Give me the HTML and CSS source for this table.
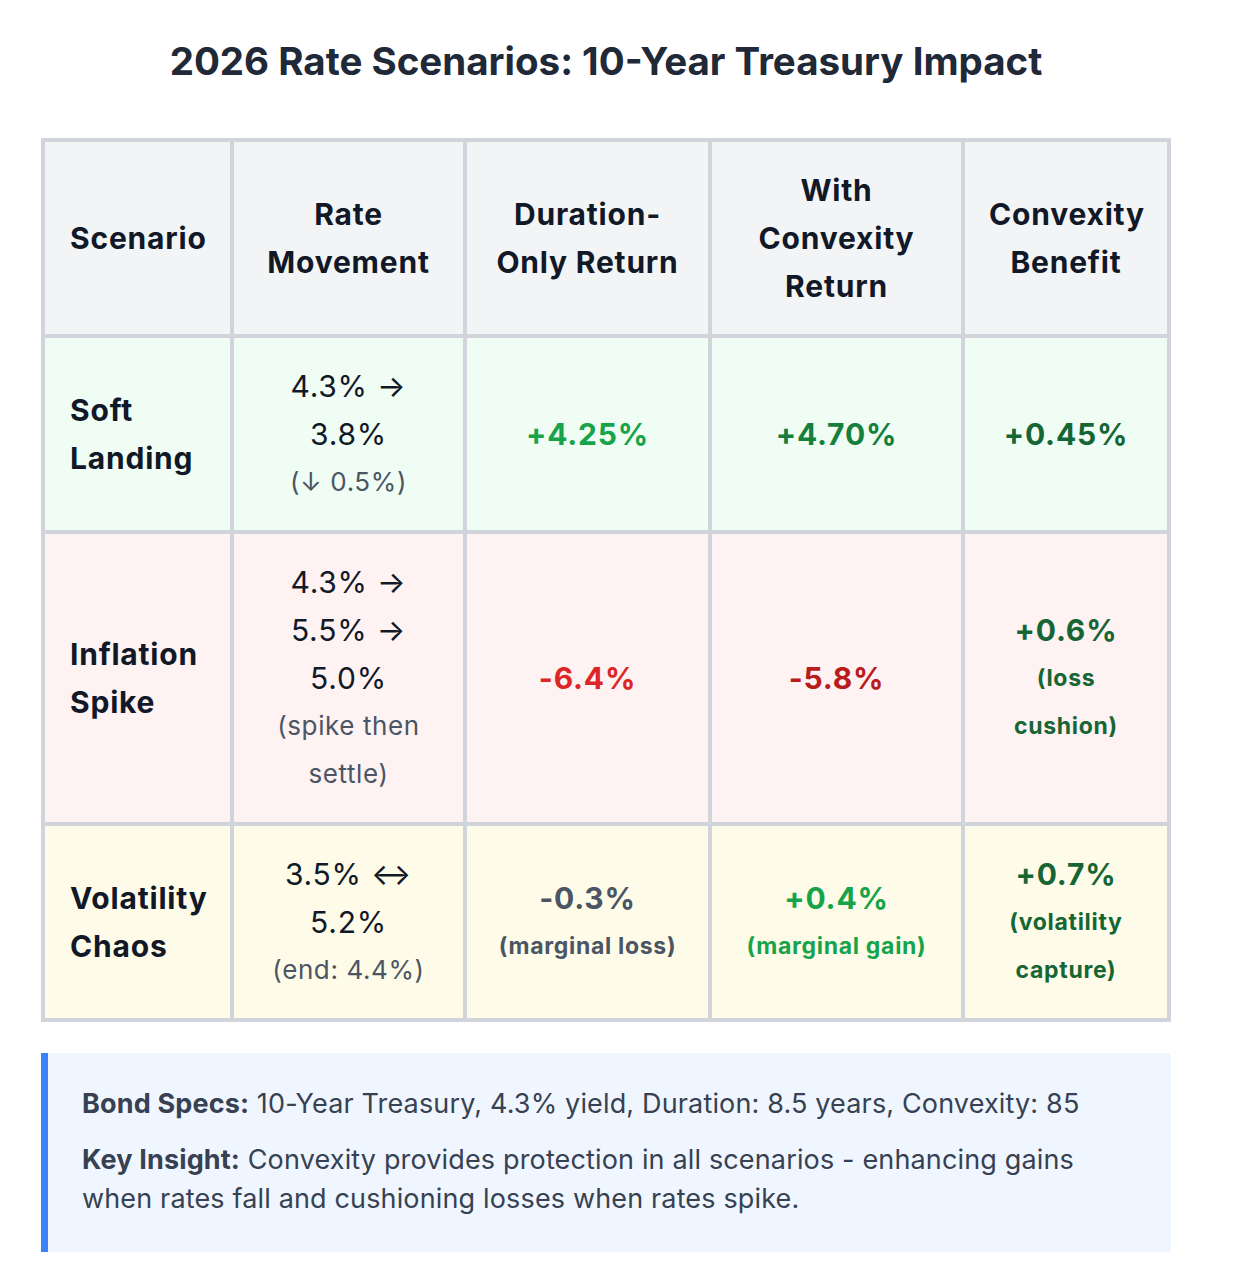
FILE: index.html
```html
<!DOCTYPE html>
<html lang="en">
<head>
<meta charset="utf-8">
<title>2026 Rate Scenarios</title>
<link rel="stylesheet" href="styles.css">
</head>
<body>
<main class="page">
  <h1 class="title">2026 Rate Scenarios: 10-Year Treasury Impact</h1>
  <table class="scenarios">
    <colgroup>
      <col class="c1"><col class="c2"><col class="c3"><col class="c4"><col class="c5">
    </colgroup>
    <thead>
      <tr>
        <th class="left">Scenario</th>
        <th>Rate Movement</th>
        <th>Duration-Only Return</th>
        <th>With Convexity Return</th>
        <th>Convexity Benefit</th>
      </tr>
    </thead>
    <tbody>
      <tr class="row-soft">
        <td class="name">Soft Landing</td>
        <td class="move">4.3% → 3.8%<span class="note">(↓ 0.5%)</span></td>
        <td class="val green-1">+4.25%</td>
        <td class="val green-2">+4.70%</td>
        <td class="val green-3">+0.45%</td>
      </tr>
      <tr class="row-infl">
        <td class="name">Inflation Spike</td>
        <td class="move">4.3% → 5.5% → 5.0%<span class="note">(spike then settle)</span></td>
        <td class="val red-1">-6.4%</td>
        <td class="val red-2">-5.8%</td>
        <td class="val green-3">+0.6%<span class="sub">(loss cushion)</span></td>
      </tr>
      <tr class="row-vol">
        <td class="name">Volatility Chaos</td>
        <td class="move">3.5% ↔ 5.2%<span class="note">(end: 4.4%)</span></td>
        <td class="val gray">-0.3%<span class="sub">(marginal loss)</span></td>
        <td class="val green-1">+0.4%<span class="sub">(marginal gain)</span></td>
        <td class="val green-3">+0.7%<span class="sub">(volatility capture)</span></td>
      </tr>
    </tbody>
  </table>
  <section class="info">
    <p><strong>Bond Specs:</strong> 10-Year Treasury, 4.3% yield, Duration: 8.5 years, Convexity: 85</p>
    <p><strong>Key Insight:</strong> Convexity provides protection in all scenarios - enhancing gains when rates fall and cushioning losses when rates spike.</p>
  </section>
</main>
</body>
</html>
```
FILE: styles.css
```css
html, body {
  margin: 0;
  padding: 0;
  background: #ffffff;
}

body {
  font-family: Inter, "Noto Sans", "Liberation Sans", sans-serif;
  color: #111827;
}

.page {
  width: 1130px;
  padding: 38px 0 0 41px;
}

.title {
  margin: 0 0 54px;
  font-size: 38.5px;
  line-height: 46px;
  font-weight: 700;
  color: #1f2937;
  text-align: center;
}

.scenarios {
  width: 1130px;
  table-layout: fixed;
  border-collapse: collapse;
  border: 4px solid #d1d5db;
}

.c1 { width: 189px; }
.c2 { width: 233px; }
.c3 { width: 245px; }
.c4 { width: 253px; }
.c5 { width: 206px; }

.scenarios th,
.scenarios td {
  border: 4px solid #d1d5db;
  padding: 24px;
  font-size: 30px;
  line-height: 48px;
  letter-spacing: 0.8px;
  text-align: center;
  vertical-align: middle;
}

.scenarios th {
  background: #f3f4f6;
  font-weight: 700;
  color: #111827;
}

.scenarios th.left,
.scenarios td.name {
  text-align: left;
  padding-left: 25px;
  padding-right: 20px;
}

.scenarios td.name {
  font-weight: 700;
}

.row-soft td { background: #f0fdf4; }
.row-infl td { background: #fef2f2; }
.row-vol td { background: #fefce8; }

.move {
  color: #111827;
}

.note {
  display: block;
  font-size: 26px;
  letter-spacing: 0.6px;
  color: #4b5563;
}

.val {
  font-weight: 700;
}

.sub {
  display: block;
  font-size: 23px;
  letter-spacing: 0.7px;
}

.green-1 { color: #16a34a; }
.green-2 { color: #15803d; }
.green-3 { color: #166534; }
.red-1 { color: #dc2626; }
.red-2 { color: #b91c1c; }
.gray { color: #4b5563; }

.info {
  margin-top: 31px;
  width: 1130px;
  box-sizing: border-box;
  background: #eff6ff;
  border-left: 7px solid #3b82f6;
  padding: 31px 34px 34px 34px;
  color: #374151;
  font-size: 27px;
  line-height: 39px;
  letter-spacing: 0.15px;
}

.info p {
  margin: 0 0 17px;
}

.info p:last-child {
  margin-bottom: 0;
}

.info strong {
  font-weight: 700;
}
```
